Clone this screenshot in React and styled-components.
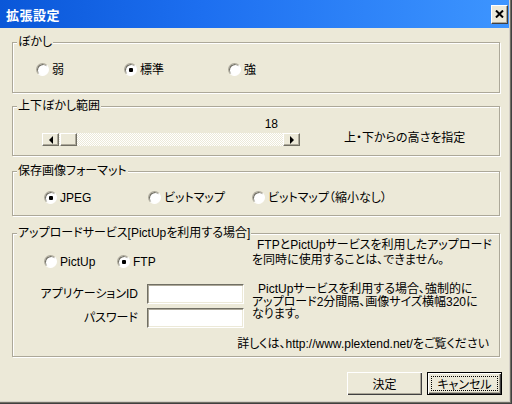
import styled, { createGlobalStyle, css } from 'styled-components';

const Global = createGlobalStyle`
  html, body {
    margin: 0;
    padding: 0;
    background: #ece9d8;
  }
  body {
    font-family: "Liberation Sans", "Noto Sans CJK JP", sans-serif;
    font-size: 12px;
    color: #000;
    font-feature-settings: "palt";
  }
`;

const Window = styled.div`
  width: 512px;
  height: 404px;
  box-sizing: border-box;
  background: #ece9d8;
  box-shadow: inset -1px -1px 0 #404040, inset -2px -2px 0 #716f64, inset -3px -3px 0 #d4d0c8;
  overflow: hidden;
`;

const TitleBar = styled.div`
  height: 28px;
  margin-right: 3px;
  display: flex;
  align-items: center;
  padding-left: 6px;
  background: linear-gradient(to right, #0a57d8 0%, #1d6ff0 40%, #3d95ff 100%);
`;

const Title = styled.div`
  font-family: "Noto Sans CJK JP", sans-serif;
  font-weight: bold;
  font-size: 13px;
  color: #fff;
  letter-spacing: 0.5px;
  margin-top: 1px;
`;

const CloseButton = styled.div`
  margin-left: auto;
  margin-right: 1px;
  width: 17px;
  height: 19px;
  box-sizing: border-box;
  background: #ece9d8;
  border: 1px solid;
  border-color: #fff #404040 #404040 #fff;
  box-shadow: inset -1px -1px 0 #aca899;
  display: flex;
  align-items: center;
  justify-content: center;
`;

const Body = styled.div`
  padding: 0 12px;
`;

const Frame = styled.div`
  margin-top: ${p => p.$top}px;
  border: 1px solid #aca899;
  box-shadow: inset 1px 1px 0 #fff, 1px 1px 0 #fff;
`;

const Legend = styled.div`
  display: block;
  width: fit-content;
  margin: -7px 0 0 4px;
  padding: 0 1px;
  height: 12px;
  line-height: 12px;
  background: #ece9d8;
  white-space: nowrap;
`;

const RadioRow = styled.div`
  display: flex;
  padding: ${p => p.$pad};
`;

const RadioItem = styled.div`
  display: flex;
  align-items: center;
  gap: 3px;
  width: ${p => (p.$w ? `${p.$w}px` : 'auto')};
  height: 13px;
  line-height: 12px;
  white-space: nowrap;
  flex: none;
`;

const RadioCircle = styled.span`
  box-sizing: border-box;
  width: 13px;
  height: 13px;
  flex: none;
  border-radius: 50%;
  border: 1px solid;
  border-color: #aca899 #fff #fff #aca899;
  background: #fff;
  box-shadow: inset 1px 1px 0 #716f64;
  display: flex;
  align-items: center;
  justify-content: center;
  ${p =>
    p.$checked &&
    css`
      &::after {
        content: '';
        width: 4px;
        height: 4px;
        border-radius: 1px;
        background: #000;
      }
    `}
`;

const SliderRow = styled.div`
  display: flex;
  align-items: flex-start;
  padding: 6px 0 9px 29px;
`;

const SliderCol = styled.div`
  width: 258px;
`;

const Value = styled.div`
  text-align: right;
  padding-right: 22px;
  height: 12px;
  line-height: 12px;
`;

const Track = styled.div`
  margin-top: 3px;
  height: 13px;
  display: flex;
  background-color: #fff;
  background-image: repeating-conic-gradient(#ece9d8 0 25%, #fff 0 50%);
  background-size: 2px 2px;
`;

const Knob = styled.div`
  box-sizing: border-box;
  width: 17px;
  height: 13px;
  flex: none;
  margin-left: ${p => p.$ml || 0}px;
  background: #ece9d8;
  border: 1px solid;
  border-color: #fff #716f64 #716f64 #fff;
  box-shadow: inset -1px -1px 0 #aca899;
  display: flex;
  align-items: center;
  justify-content: center;
`;

const Arrow = styled.span`
  width: 0;
  height: 0;
  border-top: 4px solid transparent;
  border-bottom: 4px solid transparent;
  ${p =>
    p.$dir === 'left'
      ? css`border-right: 4px solid #000;`
      : css`border-left: 4px solid #000;`}
`;

const Spacer = styled.div`
  flex: 1;
`;

const SideLabel = styled.div`
  margin: 14px 0 0 44px;
  line-height: 12px;
  white-space: nowrap;
`;

const UploadGrid = styled.div`
  display: grid;
  grid-template-columns: 239px 1fr;
  align-items: start;
`;

const Note = styled.div`
  margin-top: ${p => p.$mt}px;
  line-height: ${p => p.$lh}px;
  white-space: nowrap;
  text-indent: ${p => p.$indent}px;
`;

const Fields = styled.div`
  margin-top: 16px;
  display: flex;
  flex-direction: column;
  gap: 4px;
`;

const FieldRow = styled.label`
  display: flex;
  align-items: center;
  height: 20px;
`;

const FieldLabel = styled.span`
  width: 125px;
  text-align: right;
  white-space: nowrap;
  line-height: 12px;
`;

const TextBox = styled.input`
  box-sizing: border-box;
  width: 97px;
  height: 20px;
  margin: 0 0 0 9px;
  padding: 0 3px;
  background: #fff;
  border: 1px solid;
  border-color: #716f64 #fff #fff #716f64;
  box-shadow: inset 1px 1px 0 #aca899, inset -1px -1px 0 #ece9d8;
  font: inherit;
  outline: none;
`;

const Footnote = styled.div`
  margin-top: 10px;
  padding: 0 10px 6px 0;
  text-align: right;
  line-height: 12px;
  white-space: nowrap;
`;

const ButtonBar = styled.div`
  display: flex;
  justify-content: flex-end;
  gap: 5px;
  margin: 15px -2px 0 0;
`;

const Button = styled.button`
  position: relative;
  box-sizing: border-box;
  width: 75px;
  height: 23px;
  padding: 0;
  font: inherit;
  color: #000;
  background: #ece9d8;
  border: none;
  box-shadow: inset 1px 1px 0 #fff, inset -1px -1px 0 #404040, inset -2px -2px 0 #aca899;
  ${p =>
    p.$default &&
    css`
      border: 1px solid #000;
      &::after {
        content: '';
        position: absolute;
        inset: 3px;
        border: 1px dotted #000;
      }
    `}
`;

function Radio({ label, checked, w }) {
  return (
    <RadioItem $w={w}>
      <RadioCircle $checked={checked} />
      {label}
    </RadioItem>
  );
}

export default function App() {
  return (
    <Window>
      <Global />
      <TitleBar>
        <Title>拡張設定</Title>
        <CloseButton>
          <svg width="9" height="8" viewBox="0 0 9 8">
            <path d="M1 0.5 L8 7.5 M8 0.5 L1 7.5" stroke="#000" strokeWidth="2" />
          </svg>
        </CloseButton>
      </TitleBar>

      <Body>
        <Frame $top={14}>
          <Legend>ぼかし</Legend>
          <RadioRow $pad="15px 0 16px 23px">
            <Radio label="弱" w={88} />
            <Radio label="標準" checked w={104} />
            <Radio label="強" />
          </RadioRow>
        </Frame>

        <Frame $top={13}>
          <Legend>上下ぼかし範囲</Legend>
          <SliderRow>
            <SliderCol>
              <Value>18</Value>
              <Track>
                <Knob>
                  <Arrow $dir="left" />
                </Knob>
                <Knob $ml={1} />
                <Spacer />
                <Knob>
                  <Arrow $dir="right" />
                </Knob>
              </Track>
            </SliderCol>
            <SideLabel>上・下からの高さを指定</SideLabel>
          </SliderRow>
        </Frame>

        <Frame $top={15}>
          <Legend>保存画像フォーマット</Legend>
          <RadioRow $pad="14px 0 11px 31px">
            <Radio label="JPEG" checked w={104} />
            <Radio label="ビットマップ" w={104} />
            <Radio label="ビットマップ（縮小なし）" />
          </RadioRow>
        </Frame>

        <Frame $top={17}>
          <Legend>アップロードサービス[PictUpを利用する場合]</Legend>
          <UploadGrid>
            <RadioRow $pad="16px 0 0 31px">
              <Radio label="PictUp" w={73} />
              <Radio label="FTP" checked />
            </RadioRow>
            <Note $mt={-1} $lh={15} $indent={5}>
              FTPとPictUpサービスを利用したアップロード
              <br />
              を同時に使用することは、できません。
            </Note>
            <Fields>
              <FieldRow>
                <FieldLabel>アプリケーションID</FieldLabel>
                <TextBox />
              </FieldRow>
              <FieldRow>
                <FieldLabel>パスワード</FieldLabel>
                <TextBox type="password" />
              </FieldRow>
            </Fields>
            <Note $mt={15} $lh={12.5} $indent={6}>
              PictUpサービスを利用する場合、強制的に
              <br />
              アップロード2分間隔、画像サイズ横幅320に
              <br />
              なります。
            </Note>
          </UploadGrid>
          <Footnote>詳しくは、http://www.plextend.net/をご覧ください</Footnote>
        </Frame>

        <ButtonBar>
          <Button>決定</Button>
          <Button $default>キャンセル</Button>
        </ButtonBar>
      </Body>
    </Window>
  );
}
